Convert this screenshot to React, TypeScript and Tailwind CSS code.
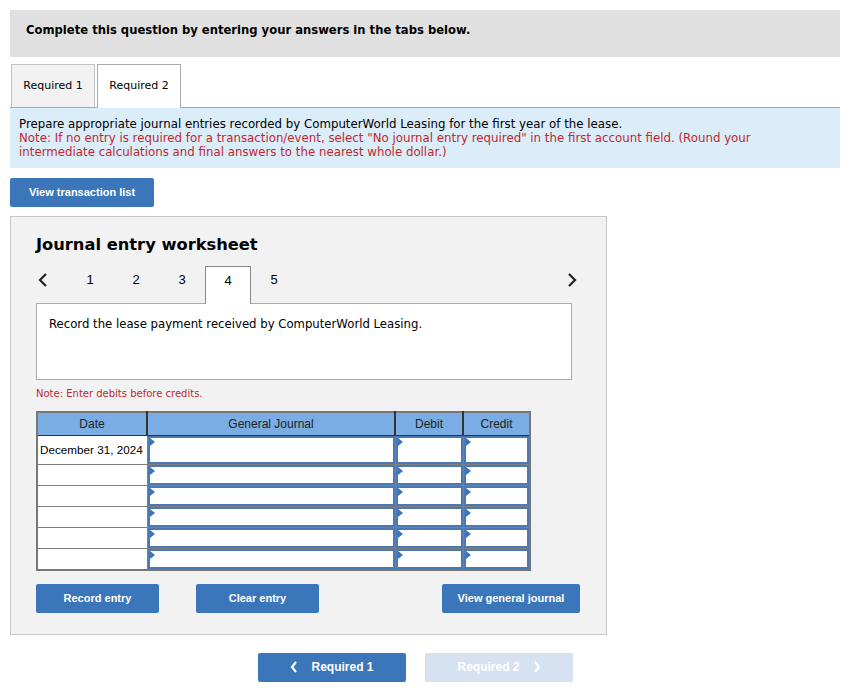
import React from 'react'

const verdana = { fontFamily: '"DejaVu Sans", Verdana, sans-serif' }

function Arrow() {
  return (
    <svg className="absolute left-0 top-0" width="5" height="8" viewBox="0 0 5 8">
      <path d="M0 0 L5 4 L0 8 Z" fill="#3b74b8" />
    </svg>
  )
}

function InputCell({ tall }: { tall?: boolean }) {
  return (
    <td className="border border-[#7f7f7f] p-0">
      <div className={`relative w-full border-2 border-[#4c79b2] bg-white ${tall ? 'h-[28px]' : 'h-[20px]'}`}>
        <Arrow />
      </div>
    </td>
  )
}

export default function App() {
  const rows = [0, 1, 2, 3, 4, 5]
  return (
    <div className="min-h-[689px] bg-white pb-[10px] pl-[10px] pr-[3px] pt-[10px] text-black" style={{ fontFamily: '"Liberation Sans", Arial, sans-serif' }}>
      <div className="h-[47px] bg-[#e0e0e0] pl-4 pt-[12px] text-[11.6px] font-bold" style={verdana}>
        Complete this question by entering your answers in the tabs below.
      </div>

      <div className="mt-[7px] flex items-end border-b border-[#a9a9a9] pl-px" style={verdana}>
        <div className="flex h-[43px] w-[84px] items-center justify-center border border-b-0 border-[#c3c3c3] bg-[#f2f2f2] text-[11px]">
          Required 1
        </div>
        <div className="relative -mb-px ml-[2px] flex h-[44px] w-[84px] items-center justify-center border border-b-0 border-[#a9a9a9] bg-white text-[11px]">
          Required 2
        </div>
      </div>

      <div className="bg-[#dbedf9] pb-[9px] pl-[9px] pr-[60px] pt-[9px] text-[11.8px] leading-[14px]" style={verdana}>
        <div>Prepare appropriate journal entries recorded by ComputerWorld Leasing for the first year of the lease.</div>
        <div className="text-[#c0282d]">
          Note: If no entry is required for a transaction/event, select "No journal entry required" in the first account field. (Round your intermediate calculations and final answers to the nearest whole dollar.)
        </div>
      </div>

      <button className="mt-[10px] h-[29px] w-[144px] rounded-[2px] bg-[#3a76b9] text-[11px] font-bold text-white">
        View transaction list
      </button>

      <div className="mt-[9px] w-[597px] border border-[#c8c8c8] bg-[#f2f2f2] pb-[21px] pl-[25px] pr-[26px] pt-[16px]">
        <div className="text-[16.3px] font-bold" style={verdana}>Journal entry worksheet</div>

        <div className="mt-[9px] flex h-[37px] w-[545px] items-stretch">
          <div className="flex w-[31px] items-center pb-[10px] pl-[2px]">
            <svg width="10" height="14" viewBox="0 0 10 14"><path d="M8 1 L2 7 L8 13" stroke="#222" strokeWidth="2.2" fill="none" /></svg>
          </div>
          {[1, 2, 3].map(n => (
            <div key={n} className="flex w-[46px] items-center justify-center pb-[10px] text-[13px]">{n}</div>
          ))}
          <div className="relative z-10 -mb-px flex w-[46px] items-center justify-center border border-b-0 border-[#8a8a8a] bg-white pb-[10px] text-[13px]">4</div>
          <div className="flex w-[46px] items-center justify-center pb-[10px] text-[13px]">5</div>
          <div className="flex-1" />
          <div className="flex w-[14px] items-center pb-[10px]">
            <svg width="10" height="14" viewBox="0 0 10 14"><path d="M2 1 L8 7 L2 13" stroke="#222" strokeWidth="2.2" fill="none" /></svg>
          </div>
        </div>

        <div className="h-[77px] w-[536px] border border-[#aaaaaa] bg-white px-[12px] pt-[12px] text-[11.7px]" style={verdana}>
          Record the lease payment received by ComputerWorld Leasing.
        </div>

        <div className="mt-[6px] text-[10px] text-[#c0282d]" style={verdana}>Note: Enter debits before credits.</div>

        <table className="mt-[10px] w-[493px] table-fixed border-collapse border-2 border-[#777] text-[12px]">
          <colgroup>
            <col className="w-[110px]" />
            <col className="w-[248px]" />
            <col className="w-[68px]" />
            <col className="w-[67px]" />
          </colgroup>
          <thead>
            <tr className="h-[23px] bg-[#79ade3] text-[#222]">
              <th className="border border-r-2 border-[#333] border-l-[#777] font-normal">Date</th>
              <th className="border border-r-2 border-[#333] font-normal">General Journal</th>
              <th className="border border-r-2 border-[#333] font-normal">Debit</th>
              <th className="border border-[#333] font-normal">Credit</th>
            </tr>
          </thead>
          <tbody>
            {rows.map(r => (
              <tr key={r} className="bg-white">
                <td className="whitespace-nowrap border border-[#7f7f7f] px-[2px] text-[11.7px]">
                  {r === 0 ? 'December 31, 2024' : ''}
                </td>
                <InputCell tall={r === 0} />
                <InputCell tall={r === 0} />
                <InputCell tall={r === 0} />
              </tr>
            ))}
          </tbody>
        </table>

        <div className="mt-[13px] flex items-center">
          <button className="h-[29px] w-[123px] shrink-0 rounded-[2px] bg-[#3a76b9] text-[11px] font-bold text-white">Record entry</button>
          <button className="ml-[37px] h-[29px] w-[123px] shrink-0 rounded-[2px] bg-[#3a76b9] text-[11px] font-bold text-white">Clear entry</button>
          <button className="ml-[123px] h-[29px] w-[138px] shrink-0 rounded-[2px] bg-[#3a76b9] text-[11px] font-bold text-white">View general journal</button>
        </div>
      </div>

      <div className="mt-[18px] flex justify-center gap-[19px] pr-[19px]">
        <button className="flex h-[29px] w-[148px] items-center justify-center gap-[13px] rounded-[2px] bg-[#3a76b9] text-[12px] font-bold text-white">
          <svg width="8" height="12" viewBox="0 0 8 12"><path d="M6 1 L2 6 L6 11" stroke="#fff" strokeWidth="2.2" fill="none" /></svg>
          Required 1
        </button>
        <button className="flex h-[29px] w-[148px] items-center justify-center gap-[13px] rounded-[2px] bg-[#d6e2f1] text-[12px] font-bold text-white">
          Required 2
          <svg width="8" height="12" viewBox="0 0 8 12"><path d="M2 1 L6 6 L2 11" stroke="#fff" strokeWidth="2.2" fill="none" /></svg>
        </button>
      </div>
    </div>
  )
}
